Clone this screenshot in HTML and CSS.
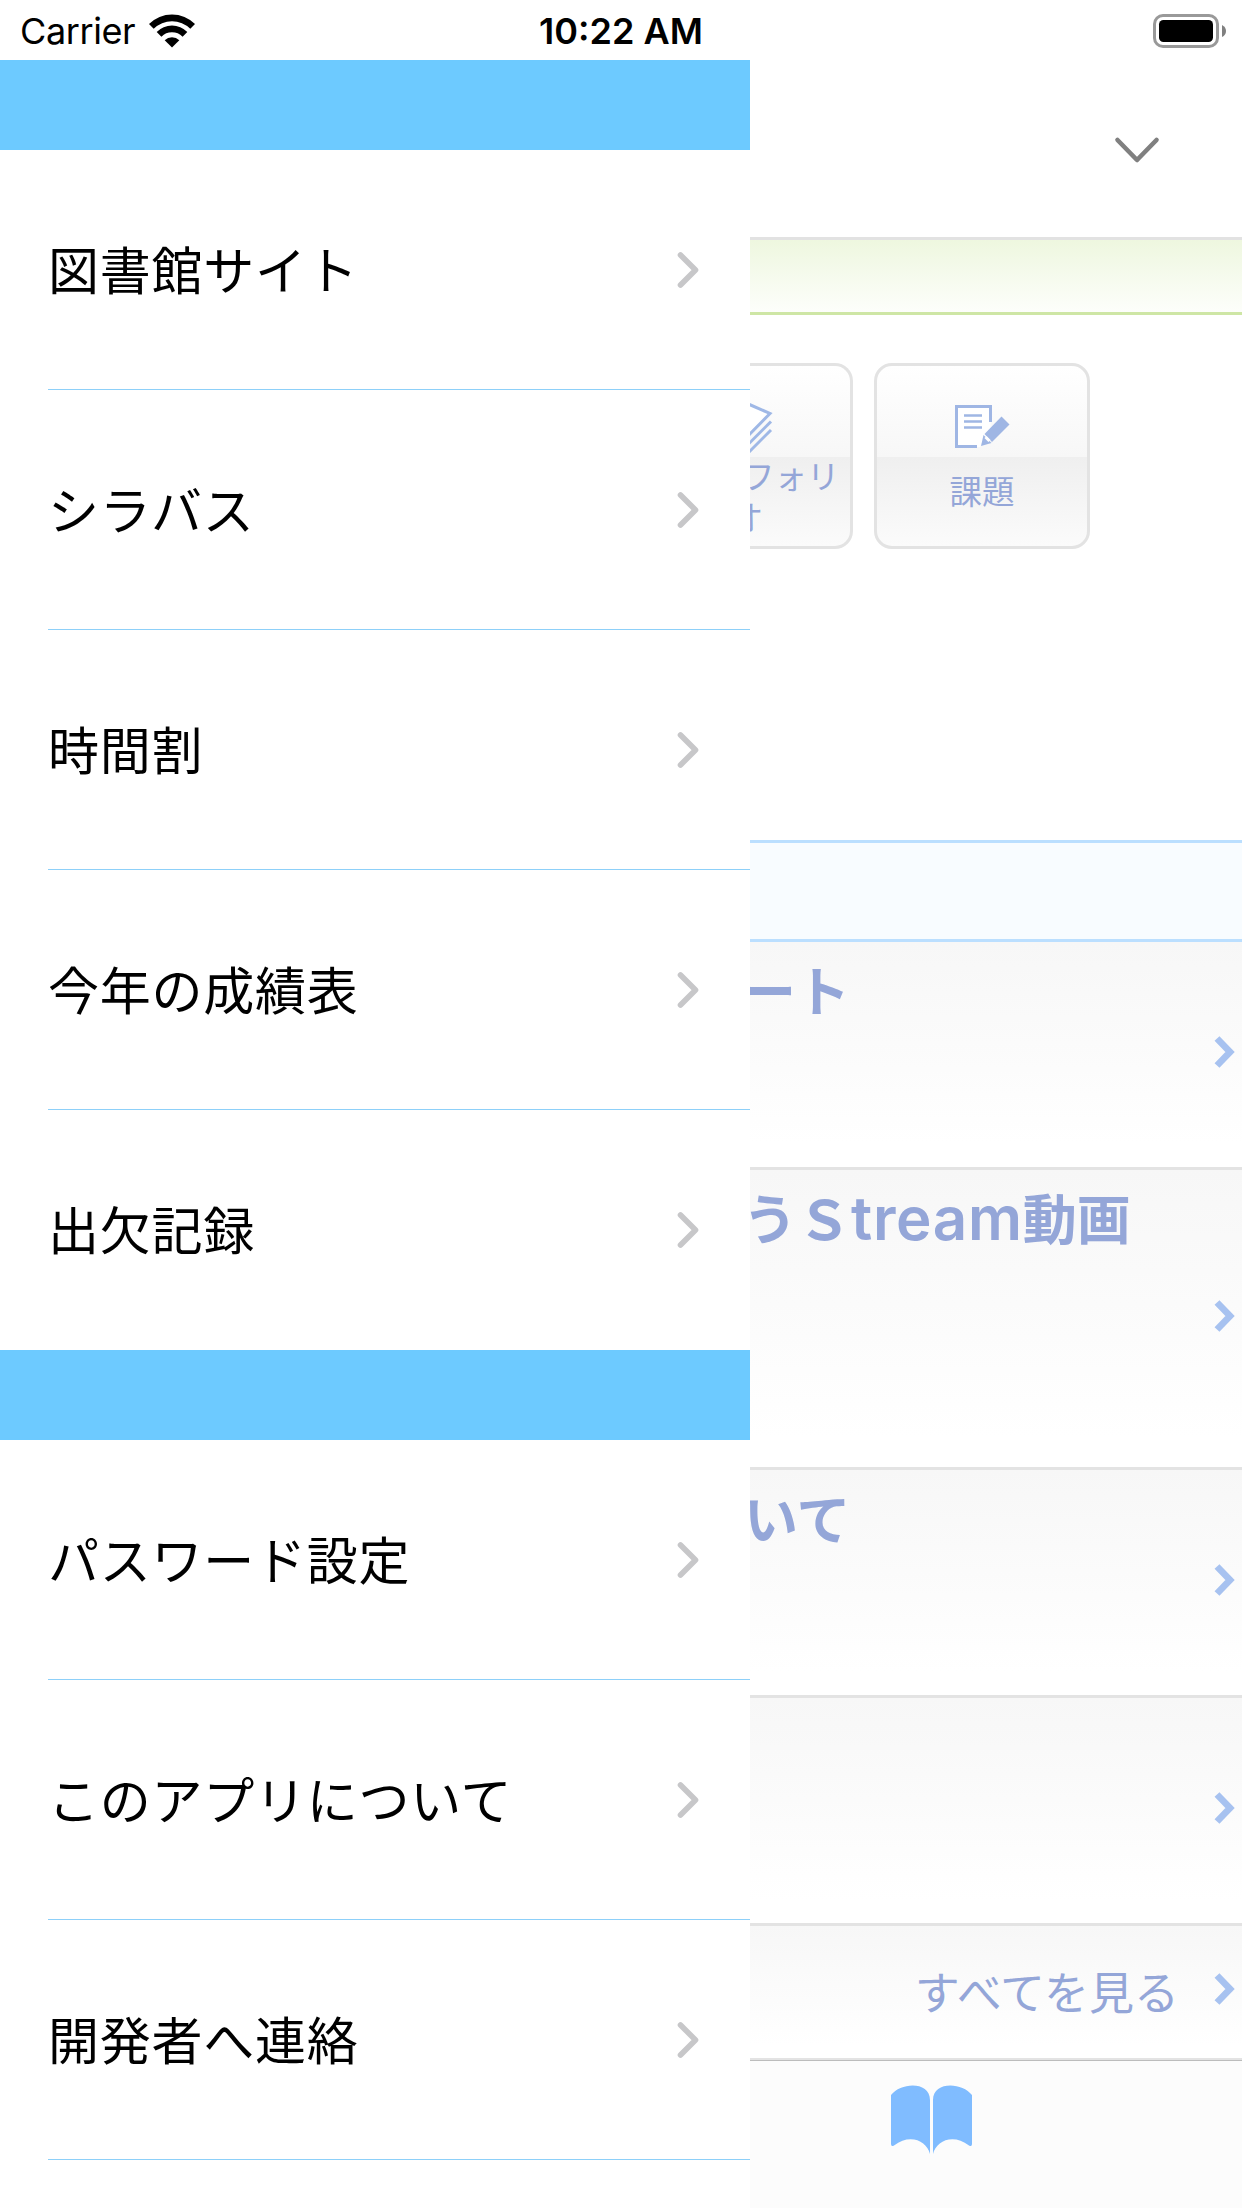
FILE: index.html
```html
<!DOCTYPE html>
<html lang="ja">
<head>
<meta charset="utf-8">
<title>メニュー</title>
<link rel="stylesheet" href="styles.css">
</head>
<body>
<svg class="defs" width="0" height="0" aria-hidden="true">
  <symbol id="disclosure" viewBox="0 0 22 38"><path d="M3.5 4 L18.5 19 L3.5 34" fill="none" stroke="#c7c7c9" stroke-width="5.6" stroke-linecap="round" stroke-linejoin="round"/></symbol>
  <symbol id="arrow" viewBox="0 0 22 34"><path d="M3 3.500 L16 17 L3 30.500" fill="none" stroke="#a7c2f0" stroke-width="6.800"/></symbol>
</svg>
<header class="status">
  <div class="status-left">
    <span class="carrier">Carrier</span>
    <svg class="wifi" width="46" height="34" viewBox="0 0 46 34">
      <path d="M0 10 A32.500 32.500 0 0 1 46 10 L41.300 14.800 A26 26 0 0 0 4.700 14.800Z"/>
      <path d="M7.700 18 A21.500 21.500 0 0 1 38.300 18 L33.600 22.700 A15 15 0 0 0 12.400 22.700Z"/>
      <path d="M15.700 26.200 A10.500 10.500 0 0 1 30.300 26.200 L23 33.500Z"/>
    </svg>
  </div>
  <span class="time">10:22 AM</span>
  <div class="status-right">
    <svg width="74" height="34" viewBox="0 0 74 34">
      <rect x="1.500" y="1.500" width="63" height="31" rx="8.500" fill="none" stroke="#999" stroke-width="3"/>
      <rect x="6" y="6" width="54" height="22" rx="4.500"/>
      <path d="M69 11 Q73 13 73 17 Q73 21 69 23Z" fill="#808080"/>
    </svg>
  </div>
</header>
<div class="app">
  <nav class="drawer">
    <div class="section-bar"></div>
    <ul class="menu">
      <li><span>図書館サイト</span><svg><use href="#disclosure"/></svg></li>
      <li><span>シラバス</span><svg><use href="#disclosure"/></svg></li>
      <li><span>時間割</span><svg><use href="#disclosure"/></svg></li>
      <li><span>今年の成績表</span><svg><use href="#disclosure"/></svg></li>
      <li class="last"><span>出欠記録</span><svg><use href="#disclosure"/></svg></li>
    </ul>
    <div class="section-bar"></div>
    <ul class="menu">
      <li><span>パスワード設定</span><svg><use href="#disclosure"/></svg></li>
      <li><span>このアプリについて</span><svg><use href="#disclosure"/></svg></li>
      <li><span>開発者へ連絡</span><svg><use href="#disclosure"/></svg></li>
    </ul>
  </nav>
  <main class="page">
    <div class="page-head">
      <svg width="46" height="28" viewBox="0 0 46 28"><path d="M3.500 4 L23 24 L42.500 4" fill="none" stroke="#808080" stroke-width="4.600" stroke-linecap="round" stroke-linejoin="round"/></svg>
    </div>
    <div class="green-bar"></div>
    <div class="tiles">
      <div class="tile tile-cut">
        <svg class="stack" width="24" height="52" viewBox="0 0 24 52" fill="none" stroke="#9fb8e6" stroke-width="3">
          <path d="M-4 2 L20 12.500 L-3 36" fill="#fff"/>
          <path d="M21 20.500 L-3 44.500"/>
          <path d="M21 29 L-3 53"/>
        </svg>
        <span>フォリ</span>
        <span class="wrap">オ</span>
      </div>
      <div class="tile">
        <svg class="note" width="56" height="46" viewBox="0 0 56 46">
          <path d="M1.500 2.500 H35.500 V24 L25 43 H1.500Z" fill="#fff"/>
          <path d="M35.500 18 V2.500 H1.500 V42.500 H22" fill="none" stroke="#9fb6e4" stroke-width="3"/>
          <path d="M9 11.500 H27 M9 17.500 H27 M9 23.500 H27" stroke="#9fb6e4" stroke-width="2.600"/>
          <path d="M46.500 12.500 L54.500 20.500 L37 38 L29.500 30Z" fill="#9fb6e4"/>
          <path d="M28.500 31 L36.500 39 L26 42Z" fill="#9fb6e4"/>
          <path d="M30.500 33 L34.500 37" stroke="#fff" stroke-width="3"/>
        </svg>
        <span>課題</span>
      </div>
    </div>
    <div class="blue-bar"></div>
    <div class="row"><b class="t1">ート</b><svg><use href="#arrow"/></svg></div>
    <div class="row tall"><b class="t2">うＳ<i>tream</i>動画</b><svg><use href="#arrow"/></svg></div>
    <div class="row"><b class="t3">いて</b><svg><use href="#arrow"/></svg></div>
    <div class="row"><svg><use href="#arrow"/></svg></div>
    <div class="row all"><span>すべてを見る</span><svg><use href="#arrow"/></svg></div>
    <div class="tabbar">
      <svg width="82" height="70" viewBox="0 0 82 70" fill="#80bcff">
        <path d="M0 10 C10 -3 39 -4 39 15 V69 C36 56 19 48 3 60.500 Q0 62 0 59Z"/>
        <path d="M81 10 C71 -3 42 -4 42 15 V69 C45 56 62 48 78 60.500 Q81 62 81 59Z"/>
      </svg>
    </div>
  </main>
</div>
</body>
</html>
```
FILE: styles.css
```css
* { box-sizing: border-box; }
body {
  margin: 0;
  width: 1242px;
  height: 2208px;
  overflow: hidden;
  background: #fff;
  color: #000;
  font-family: "Noto Sans CJK JP", sans-serif;
}
svg { display: block; flex: none; }
.defs { position: absolute; }

.status {
  display: grid;
  grid-template-columns: 1fr auto 1fr;
  align-items: center;
  height: 60px;
  font-family: Inter, "Liberation Sans", sans-serif;
  font-size: 36px;
  line-height: 60px;
}
.status-left { display: flex; align-items: center; padding-left: 20px; gap: 13px; }
.carrier { width: 116px; white-space: nowrap; letter-spacing: -0.4px; padding-top: 1px; }
.time { font-weight: 600; padding-top: 1px; }
.status-right { display: flex; justify-content: flex-end; padding-right: 15px; }

.app { display: grid; grid-template-columns: 750px 492px; height: 2148px; }

.drawer { height: 2148px; overflow: hidden; }
.section-bar { height: 90px; background: #6dcaff; }
.menu { list-style: none; margin: 0; padding: 0; }
.menu li {
  display: flex;
  align-items: center;
  justify-content: space-between;
  height: 240px;
  margin-left: 48px;
  padding-right: 51px;
  border-bottom: 1px solid #8dd0f9;
  font-size: 51px;
  letter-spacing: 0.75px;
  white-space: nowrap;
}
.menu li.last { border-bottom-color: transparent; }
.menu span { padding-bottom: 4px; }
.menu svg { width: 22px; height: 38px; }

.page { height: 2148px; overflow: hidden; }
.page-head {
  display: flex;
  justify-content: flex-end;
  height: 177px;
  padding: 76px 82px 0 0;
}
.green-bar {
  height: 78px;
  border-top: 3px solid #e2e2e2;
  border-bottom: 3px solid #cee6a5;
  background: linear-gradient(#eef7df, #fdfefb);
}
.tiles { display: flex; gap: 21px; height: 525px; padding-top: 48px; }
.tile {
  display: flex;
  flex: none;
  flex-direction: column;
  align-items: center;
  width: 216px;
  height: 186px;
  padding-top: 38px;
  border: 3px solid #e3e3e3;
  border-radius: 18px;
  background: linear-gradient(#fff, #f7f7f7 91px, #efefef 91px, #fbfbfb);
  color: #94a6d8;
  font-size: 32.5px;
  line-height: 41px;
}
.tile .note { margin: 0 0 19px 2px; }
.tile-cut {
  width: 103px;
  align-items: flex-start;
  padding-top: 35px;
  border-left: 0;
  border-radius: 0 18px 18px 0;
  white-space: nowrap;
}
.tile-cut span { margin-left: -8px; }
.tile-cut .wrap { margin-left: -19px; }
.tile-cut .stack { margin-bottom: 1px; }
.blue-bar {
  height: 102px;
  border-top: 3px solid #bbdfff;
  border-bottom: 3px solid #bbdfff;
  background: #f8fcff;
}

.row {
  display: flex;
  align-items: center;
  height: 228px;
  padding: 0 6px 6px 0;
  border-bottom: 3px solid #e3e3e3;
  background: linear-gradient(#f7f7f7, #fff 90%);
  color: #94a6d8;
}
.row.tall { height: 300px; }
.row svg { width: 22px; height: 34px; margin-left: auto; }
.row b {
  align-self: flex-start;
  padding-top: 7px;
  font-size: 54px;
  line-height: 80px;
  white-space: nowrap;
}
.row i {
  font-family: Inter, sans-serif;
  font-size: 60px;
  font-style: normal;
  font-weight: 600;
  letter-spacing: 0.7px;
  line-height: 1;
}
.t1 { margin-left: -8px; }
.t2 { margin-left: -7px; }
.t3 { margin-left: -6px; }
.row.all { height: 134px; border-bottom-width: 2px; }
.row.all span { margin-left: auto; padding-top: 3px; font-size: 45px; line-height: 60px; }
.row.all svg { margin-left: 35px; }

.tabbar {
  height: 148px;
  padding: 24px 0 0 141px;
  border-top: 1px solid #bcbcbc;
  background: #fcfcfc;
}
```
